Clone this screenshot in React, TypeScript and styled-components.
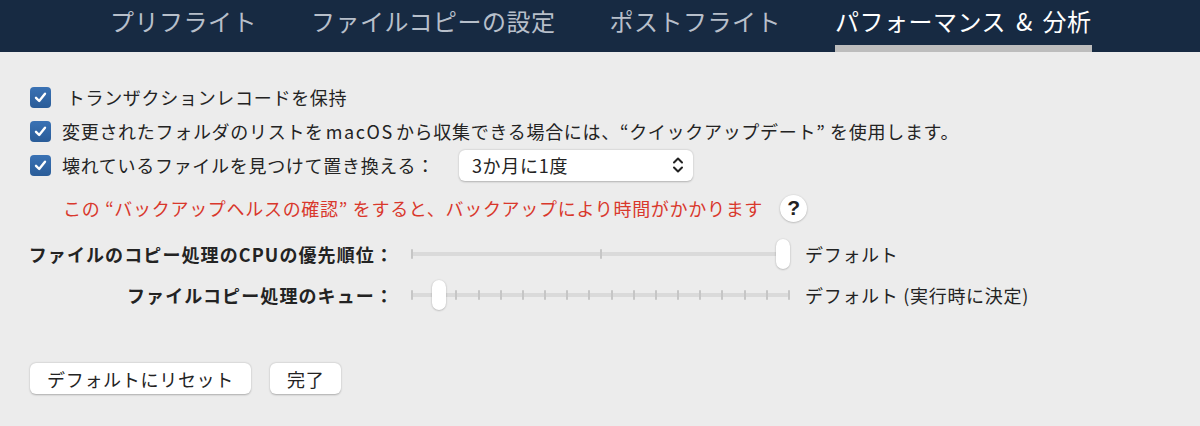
import React from 'react';
import styled, { createGlobalStyle } from 'styled-components';

const GlobalStyle = createGlobalStyle`
  body {
    margin: 0;
    background: #ececec;
    font-family: "Noto Sans CJK JP", "Noto Sans", "Liberation Sans", sans-serif;
    color: #232323;
  }
`;

const Page = styled.div`
  width: 1200px;
  height: 426px;
  background: #ececec;
  overflow: hidden;
`;

const TabBar = styled.nav`
  height: 52px;
  background: #172a42;
  display: flex;
  padding-left: 83px;
  box-sizing: border-box;
`;

const Tab = styled.div<{ active?: boolean }>`
  margin: 0 27px;
  height: 52px;
  box-sizing: border-box;
  padding-top: 3px;
  font-size: 24px;
  line-height: 36px;
  letter-spacing: 0.5px;
  word-spacing: 4px;
  color: ${(p) => (p.active ? '#ffffff' : '#b7bfca')};
  border-bottom: 7px solid ${(p) => (p.active ? '#bdbdbd' : 'transparent')};
  white-space: nowrap;
`;

const Content = styled.div`
  padding: 28px 0 0 30px;
  font-size: 18px;
  letter-spacing: 0.7px;
`;

const CheckRow = styled.div`
  height: 34px;
  display: flex;
  align-items: center;
  gap: 11px;
  white-space: nowrap;
`;

const Latin = styled.span`
  letter-spacing: 1.6px;
  margin: 0 2px;
`;

const Box = styled.span`
  width: 21px;
  height: 21px;
  border-radius: 4px;
  background: linear-gradient(#3a72b4, #2a5c98);
  display: flex;
  align-items: center;
  justify-content: center;
  flex-shrink: 0;
`;

const Select = styled.div`
  margin-left: 13px;
  width: 234px;
  height: 31px;
  box-sizing: border-box;
  background: #fff;
  border-radius: 6px;
  box-shadow: 0 0.5px 2px rgba(0, 0, 0, 0.25);
  display: flex;
  align-items: center;
  justify-content: space-between;
  padding: 0 8px 0 13px;
`;

const Warning = styled.div`
  margin-top: 8px;
  height: 36px;
  padding-left: 33px;
  display: flex;
  align-items: center;
  gap: 17px;
  color: #d9382c;
  white-space: nowrap;
`;

const Help = styled.span`
  width: 27px;
  height: 27px;
  border-radius: 50%;
  background: #fff;
  box-shadow: 0 0.5px 2px rgba(0, 0, 0, 0.3);
  color: #222;
  font-family: "Liberation Sans", sans-serif;
  font-size: 21px;
  font-weight: 700;
  display: flex;
  align-items: center;
  justify-content: center;
  letter-spacing: 0;
`;

const SliderRow = styled.div<{ first?: boolean }>`
  margin-top: ${(p) => (p.first ? '12px' : '9px')};
  margin-left: -30px;
  height: 32px;
  display: grid;
  grid-template-columns: 400px 390px auto;
  align-items: center;
  white-space: nowrap;
`;

const SliderLabel = styled.div`
  text-align: right;
  font-weight: 700;
  padding-right: 6px;
  letter-spacing: 1.1px;
`;

const SliderValue = styled.div`
  padding-left: 15px;
`;

const Slider = styled.div`
  position: relative;
  height: 32px;
  margin-left: 10px;
  width: 380px;
`;

const Rail = styled.div`
  position: absolute;
  left: 1px;
  right: 1px;
  top: 14px;
  height: 4px;
  border-radius: 2px;
  background: #dadada;
`;

const Ticks = styled.div`
  position: absolute;
  left: 1px;
  right: 0;
  top: 11px;
  height: 10px;
  display: flex;
  justify-content: space-between;
`;

const Tick = styled.span`
  width: 2px;
  height: 10px;
  border-radius: 1px;
  background: #c6c6c6;
`;

const Thumb = styled.div`
  position: absolute;
  top: 1px;
  width: 14px;
  height: 30px;
  border-radius: 7px;
  background: #fff;
  box-shadow: 0 0.5px 2px rgba(0, 0, 0, 0.3);
`;

const Footer = styled.div`
  margin-top: 52px;
  display: flex;
  gap: 19px;
`;

const Button = styled.button<{ pad: number }>`
  height: 31px;
  padding: 0 ${(p) => p.pad}px;
  border: none;
  border-radius: 6px;
  background: #fff;
  box-shadow: 0 0.5px 2px rgba(0, 0, 0, 0.28);
  font-family: inherit;
  font-size: 18px;
  letter-spacing: 0.7px;
  color: #232323;
`;

const Check = () => (
  <Box>
    <svg width="15" height="15" viewBox="0 0 15 15">
      <path d="M3 7.8 L6.2 11 L12 3.8" fill="none" stroke="#fff" strokeWidth="2.4" strokeLinecap="round" strokeLinejoin="round" />
    </svg>
  </Box>
);

const Chevrons = () => (
  <svg width="14" height="20" viewBox="0 0 14 20">
    <path d="M3 7.5 L7 3.5 L11 7.5 M3 12.5 L7 16.5 L11 12.5" fill="none" stroke="#222" strokeWidth="2" strokeLinecap="round" strokeLinejoin="round" />
  </svg>
);

const TickSlider: React.FC<{ ticks: number; value: number }> = ({ ticks, value }) => {
  const left = (value / (ticks - 1)) * 366;
  return (
    <Slider>
      <Rail />
      <Ticks>
        {Array.from({ length: ticks }).map((_, i) => (
          <Tick key={i} />
        ))}
      </Ticks>
      <Thumb style={{ left }} />
    </Slider>
  );
};

const tabs = ['プリフライト', 'ファイルコピーの設定', 'ポストフライト', 'パフォーマンス & 分析'];

export default function App() {
  return (
    <Page>
      <GlobalStyle />
      <TabBar>
        {tabs.map((t, i) => (
          <Tab key={t} active={i === 3}>{t}</Tab>
        ))}
      </TabBar>
      <Content>
        <CheckRow>
          <Check />
          <span>&nbsp;トランザクションレコードを保持</span>
        </CheckRow>
        <CheckRow>
          <Check />
          <span>
            変更されたフォルダのリストを<Latin>macOS</Latin>から収集できる場合には、“クイックアップデート” を使用します。
          </span>
        </CheckRow>
        <CheckRow>
          <Check />
          <span>壊れているファイルを見つけて置き換える：</span>
          <Select>
            <span>3か月に1度</span>
            <Chevrons />
          </Select>
        </CheckRow>
        <Warning>
          <span>この “バックアップヘルスの確認” をすると、バックアップにより時間がかかります</span>
          <Help>?</Help>
        </Warning>
        <SliderRow first>
          <SliderLabel>ファイルのコピー処理のCPUの優先順位：</SliderLabel>
          <TickSlider ticks={3} value={2} />
          <SliderValue>デフォルト</SliderValue>
        </SliderRow>
        <SliderRow>
          <SliderLabel>ファイルコピー処理のキュー：</SliderLabel>
          <TickSlider ticks={18} value={1} />
          <SliderValue>デフォルト (実行時に決定)</SliderValue>
        </SliderRow>
        <Footer>
          <Button pad={17}>デフォルトにリセット</Button>
          <Button pad={17}>完了</Button>
        </Footer>
      </Content>
    </Page>
  );
}
